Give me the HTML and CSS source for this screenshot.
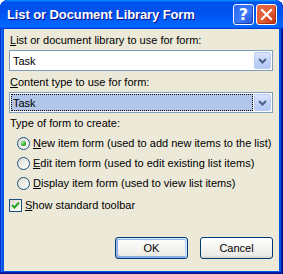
FILE: index.html
```html
<!DOCTYPE html>
<html lang="en">
<head>
    <meta charset="UTF-8">
    <title>List or Document Library Form</title>
    <link rel="stylesheet" href="styles.css">
</head>
<body>
    <div class="window">
        <div class="titlebar">
            <span class="title">List or Document Library Form</span>
            <div class="caption-buttons">
                <span class="cap-btn help">?</span>
                <span class="cap-btn close">
                    <svg width="21" height="21" viewBox="0 0 21 21"><path d="M6 6 L15 15 M15 6 L6 15" stroke="#fff" stroke-width="2.2" stroke-linecap="square"/></svg>
                </span>
            </div>
        </div>

        <div class="client">
            <div class="field-label"><u>L</u>ist or document library to use for form:</div>
            <div class="combo">
                <span class="combo-text">Task</span>
                <span class="combo-btn">
                    <svg width="9" height="6" viewBox="0 0 9 6"><polyline points="1,1 4.5,4.5 8,1" fill="none" stroke="#4d6185" stroke-width="2"/></svg>
                </span>
            </div>

            <div class="field-label second"><u>C</u>ontent type to use for form:</div>
            <div class="combo focused">
                <span class="combo-text">Task</span>
                <span class="combo-btn">
                    <svg width="9" height="6" viewBox="0 0 9 6"><polyline points="1,1 4.5,4.5 8,1" fill="none" stroke="#4d6185" stroke-width="2"/></svg>
                </span>
            </div>

            <div class="field-label third">Type of form to create:</div>
            <div class="options">
                <div class="radio-row"><span class="radio checked"></span><span><u>N</u>ew item form (used to add new items to the list)</span></div>
                <div class="radio-row"><span class="radio"></span><span><u>E</u>dit item form (used to edit existing list items)</span></div>
                <div class="radio-row"><span class="radio"></span><span><u>D</u>isplay item form (used to view list items)</span></div>
            </div>

            <div class="check-row">
                <span class="checkbox">
                    <svg width="11" height="11" viewBox="0 0 11 11"><polyline points="2,5 4.5,7.5 9,2.5" fill="none" stroke="#21a121" stroke-width="2"/></svg>
                </span>
                <span><u>S</u>how standard toolbar</span>
            </div>

            <div class="buttons">
                <button class="btn default">OK</button>
                <button class="btn">Cancel</button>
            </div>
        </div>
    </div>
</body>
</html>
```

FILE: styles.css
```css
* {
    margin: 0;
    padding: 0;
    box-sizing: border-box;
}

body {
    background: #fff;
    font-family: "Liberation Sans", Arial, sans-serif;
    font-size: 11px;
    color: #000;
}

.window {
    width: 283px;
    height: 274px;
    display: flex;
    flex-direction: column;
    background: #0054e3;
    border-radius: 8px 8px 0 0;
    box-shadow: inset -1px -1px #00138c, inset 1px 1px #0831d9, inset -2px -2px #001ea0, inset 2px 2px #166aee;
    overflow: hidden;
}

.titlebar {
    height: 29px;
    flex-shrink: 0;
    display: flex;
    align-items: center;
    justify-content: space-between;
    padding: 0 6px 0 7px;
    border-radius: 8px 8px 0 0;
    background: linear-gradient(180deg, #0997ff, #0053ee 8%, #0050ee 40%, #0066ff 88%, #0066ff 93%, #005bff 95%, #003dd7 96%, #003dd7);
}

.title {
    color: #fff;
    font-weight: bold;
    font-size: 13px;
    text-shadow: 1px 1px #0f1089;
    letter-spacing: -0.1px;
}

.caption-buttons {
    display: flex;
    gap: 2px;
}

.cap-btn {
    width: 21px;
    height: 21px;
    border: 1px solid #fff;
    border-radius: 3px;
    display: flex;
    align-items: center;
    justify-content: center;
    color: #fff;
}

.cap-btn.help {
    background: radial-gradient(circle at 80% 85%, #2d5fe0, #3c7bfa 45%, #2a64ec);
    font-weight: bold;
    font-size: 16px;
    font-family: "DejaVu Sans", sans-serif;
    box-shadow: inset -1px -1px rgba(0, 20, 120, 0.5);
}

.cap-btn.close {
    background: radial-gradient(circle at 85% 85%, #c8381a, #e45b31 45%, #e06a45);
    box-shadow: inset -1px -1px rgba(120, 20, 0, 0.5);
}

.cap-btn.close svg {
    margin: -1px;
}

.client {
    flex: 1;
    margin: 0 4px 3px 4px;
    background: #ece9d8;
    display: flex;
    flex-direction: column;
    padding: 5px 6px 12px 5px;
}

.field-label {
    line-height: 13px;
    padding-left: 1px;
}

.field-label.second {
    margin-top: 5px;
}

.field-label.third {
    margin-top: 4px;
}

.combo {
    margin-top: 3px;
    height: 21px;
    display: flex;
    align-items: center;
    background: #fff;
    border: 1px solid #7f9db9;
    padding: 1px;
}

.combo-text {
    flex: 1;
    height: 100%;
    display: flex;
    align-items: center;
    padding-left: 2px;
    font-size: 11px;
}

.combo.focused .combo-text {
    background: #b2c6ea;
    border: 1px dotted #000;
    padding-left: 1px;
    margin-right: 1px;
}

.combo-btn {
    width: 17px;
    height: 17px;
    display: flex;
    align-items: center;
    justify-content: center;
    border: 1px solid #b9cbf3;
    border-radius: 2px;
    background: linear-gradient(180deg, #dbe5fc, #c3d4fb 50%, #b4c8f6);
}

.options {
    margin-top: 3px;
}

.radio-row {
    height: 20px;
    display: flex;
    align-items: center;
    gap: 3px;
    padding-left: 8px;
}

.radio {
    width: 13px;
    height: 13px;
    border-radius: 50%;
    border: 1px solid #1c5180;
    background: linear-gradient(135deg, #dcd9ce, #fff);
    display: flex;
    align-items: center;
    justify-content: center;
}

.radio.checked::after {
    content: '';
    width: 5px;
    height: 5px;
    border-radius: 50%;
    background: radial-gradient(circle at 35% 35%, #9cef9c, #21a121 60%, #158a15);
}

.check-row {
    height: 20px;
    margin-top: 2px;
    display: flex;
    align-items: center;
    gap: 3px;
}

.checkbox {
    width: 13px;
    height: 13px;
    border: 1px solid #1c5180;
    background: linear-gradient(135deg, #dcd9ce, #fff);
    display: flex;
    align-items: center;
    justify-content: center;
}

.buttons {
    margin-top: auto;
    display: flex;
    justify-content: flex-end;
    gap: 12px;
}

.btn {
    width: 73px;
    height: 22px;
    font-family: "Liberation Sans", Arial, sans-serif;
    font-size: 11px;
    color: #000;
    border: 1px solid #003c74;
    border-radius: 3px;
    background: linear-gradient(180deg, #fff, #ecebe6 86%, #d6d0c5);
}

.btn.default {
    box-shadow: inset -1px 1px #cee7ff, inset 1px 2px #98b8ea, inset -2px 2px #bcd4f6, inset 1px -1px #89ade4, inset 2px -2px #89ade4;
}
```
